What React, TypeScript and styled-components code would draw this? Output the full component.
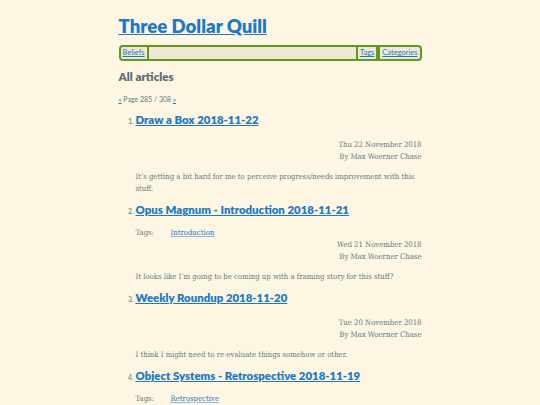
import styled, { createGlobalStyle } from 'styled-components'

const GlobalStyle = createGlobalStyle`
    html, body {
        margin: 0;
        padding: 0;
        background: #fdf6e3;
    }
`

const Page = styled.div`
    width: 303px;
    margin: 0 auto;
    padding-top: 14px;
    color: #657b83;
    font-family: 'DejaVu Serif Condensed', 'DejaVu Serif', serif;
    font-size: 7.7px;
`

const Title = styled.h1`
    margin: 0;
    font-family: Lato, 'Noto Sans', sans-serif;
    font-size: 18.6px;
    font-weight: 800;
    line-height: 24px;

    a {
        color: #1e78c8;
    }
`

const Nav = styled.nav`
    display: flex;
    align-items: stretch;
    height: 12px;
    margin-top: 7px;
    border: 2px solid #5e9b1c;
    border-radius: 4px;
    background: #eee8d5;
    font-family: Lato, 'Noto Sans', sans-serif;
    font-size: 7.5px;
    line-height: 12px;
`

const NavItem = styled.a<{ $last?: boolean }>`
    padding: 0 2px;
    color: #1e78c8;
    border-left: 2px solid #5e9b1c;
    border-right: ${(p) => (p.$last ? 'none' : '2px solid #5e9b1c')};
`

const FirstNavItem = styled.a`
    padding: 0 2px;
    color: #1e78c8;
    border-right: 2px solid #5e9b1c;
`

const NavSpacer = styled.div`
    flex: 1;
`

const Heading = styled.h2`
    margin: 8px 0 0;
    font-family: Lato, 'Noto Sans', sans-serif;
    font-size: 11.6px;
    font-weight: 800;
    line-height: 16px;
    color: #586e75;
`

const Pager = styled.p`
    margin: 9px 0 0;
    font-family: Lato, 'Noto Sans', sans-serif;
    font-size: 7px;
    line-height: 10px;

    a {
        color: #1e78c8;
    }
`

const List = styled.ol`
    margin: 7px 0 0;
    padding-left: 17px;
    font-family: Lato, 'Noto Sans', sans-serif;
    font-size: 7px;
`

const ArticleTitle = styled.h3`
    margin: 0;
    font-family: Lato, 'Noto Sans', sans-serif;
    font-size: 11.4px;
    font-weight: 800;
    line-height: 18px;

    a {
        color: #1e78c8;
    }
`

const Tags = styled.div`
    display: flex;
    margin-top: 8px;
    line-height: 12px;

    a {
        color: #1e78c8;
        text-decoration-color: #8bb8e0;
    }
`

const TagsLabel = styled.span`
    width: 35px;
`

const Meta = styled.div<{ $gap: number }>`
    margin-top: ${(p) => p.$gap}px;
    text-align: right;
    line-height: 12px;
`

const Excerpt = styled.p`
    margin: 8px 0 6px;
    line-height: 12px;
`

const Item = styled.li`
    font-family: Lato, 'Noto Sans', sans-serif;

    ${Tags}, ${Meta}, ${Excerpt} {
        font-family: 'DejaVu Serif Condensed', 'DejaVu Serif', serif;
        font-size: 7.7px;
    }
`

type Article = {
    title: string
    tags?: string[]
    date: string
    excerpt: string
}

const articles: Article[] = [
    {
        title: 'Draw a Box 2018-11-22',
        date: 'Thu 22 November 2018',
        excerpt:
            'It’s getting a bit hard for me to perceive progress/needs improvement with this stuff.',
    },
    {
        title: 'Opus Magnum - Introduction 2018-11-21',
        tags: ['Introduction'],
        date: 'Wed 21 November 2018',
        excerpt: 'It looks like I’m going to be coming up with a framing story for this stuff?',
    },
    {
        title: 'Weekly Roundup 2018-11-20',
        date: 'Tue 20 November 2018',
        excerpt: 'I think I might need to re-evaluate things somehow or other.',
    },
    {
        title: 'Object Systems - Retrospective 2018-11-19',
        tags: ['Retrospective'],
        date: 'Mon 19 November 2018',
        excerpt: 'Some thoughts on how the object systems project went.',
    },
]

const App = () => {
    return (
        <>
            <GlobalStyle />
            <Page>
                <Title>
                    <a href="#">Three Dollar Quill</a>
                </Title>
                <Nav>
                    <FirstNavItem href="#">Beliefs</FirstNavItem>
                    <NavSpacer />
                    <NavItem href="#">Tags</NavItem>
                    <NavItem href="#" $last>
                        Categories
                    </NavItem>
                </Nav>
                <Heading>All articles</Heading>
                <Pager>
                    <a href="#">«</a> Page 285 / 308 <a href="#">»</a>
                </Pager>
                <List>
                    {articles.map((article) => (
                        <Item key={article.title}>
                            <ArticleTitle>
                                <a href="#">{article.title}</a>
                            </ArticleTitle>
                            {article.tags && (
                                <Tags>
                                    <TagsLabel>Tags:</TagsLabel>
                                    {article.tags.map((tag) => (
                                        <a href="#" key={tag}>
                                            {tag}
                                        </a>
                                    ))}
                                </Tags>
                            )}
                            <Meta $gap={article.tags ? 0 : 10}>
                                <div>{article.date}</div>
                                <div>By Max Woerner Chase</div>
                            </Meta>
                            <Excerpt>{article.excerpt}</Excerpt>
                        </Item>
                    ))}
                </List>
            </Page>
        </>
    )
}

export default App
